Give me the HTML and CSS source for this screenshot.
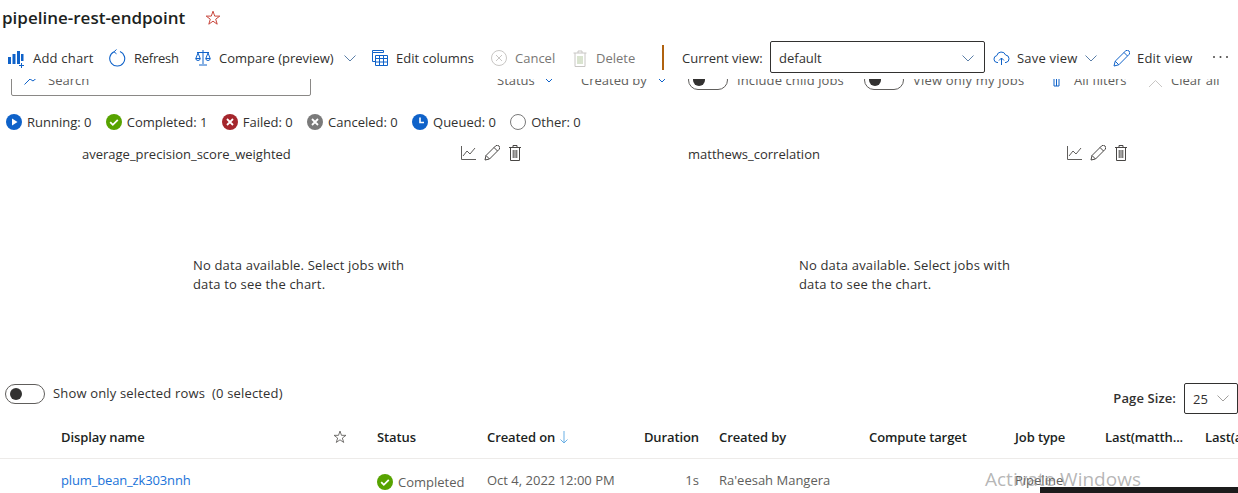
FILE: index.html
```html
<!DOCTYPE html>
<html lang="en">
<head>
    <meta charset="UTF-8">
    <meta name="viewport" content="width=device-width, initial-scale=1.0">
    <title>pipeline-rest-endpoint</title>
    <link rel="stylesheet" href="styles.css">
</head>
<body>
    <!-- Title -->
    <header class="title-row">
        <h1 class="page-title">pipeline-rest-endpoint</h1>
        <svg class="title-star" width="16" height="16" viewBox="0 0 16 16"><path d="M8 1.200l1.700 4.900h5.100l-4.100 3.100 1.500 5-4.200-3-4.200 3 1.500-5-4.100-3.100h5.100z" fill="none" stroke="#c8463c"/></svg>
    </header>

    <!-- Command bar -->
    <div class="toolbar">
        <span class="tool tool-add">
            <svg width="17" height="20" viewBox="0 0 17 20"><path d="M0 9h3v7H0zM4.500 6h3v10h-3zM9 3h3v13H9zM13 6h2.500v7H13z" fill="#0f62c9"/><path d="M13.500 15v5M11 17.500h5" stroke="#0f62c9"/></svg>
            Add chart
        </span>
        <span class="tool tool-refresh">
            <svg width="17" height="18" viewBox="0 0 17 18"><path d="M11 2.600A7.500 7.500 0 1 1 5 2.800" fill="none" stroke="#0f62c9" stroke-width="1.100"/><path d="M7.500 0.500L5 2.800l2.500 2" fill="none" stroke="#0f62c9"/></svg>
            Refresh
        </span>
        <span class="tool tool-compare">
            <svg width="16" height="18" viewBox="0 0 16 18"><path d="M8 1v14M2 3.500h12M4 16h8M3 4L.8 9.500h4.400zM13 4l-2.200 5.500h4.400zM.8 9.500a2.200 2 0 0 0 4.400 0M10.800 9.500a2.200 2 0 0 0 4.400 0" fill="none" stroke="#0f62c9"/></svg>
            Compare (preview)
        </span>
        <svg class="tool-chevron" width="12" height="7" viewBox="0 0 12 7"><path d="M.5.500L6 6l5.500-5.500" fill="none" stroke="#5b7fa8"/></svg>
        <span class="tool tool-columns">
            <svg width="16" height="16" viewBox="0 0 16 16"><path d="M.5.500h11v2h-11zM.5 2.500v9h3M3.500 5.500h12v10h-12zM3.500 8.500h12M3.500 12h12M7.500 5.500v10M11.500 5.500v10" fill="none" stroke="#0f62c9"/></svg>
            Edit columns
        </span>
        <span class="tool tool-cancel is-disabled">
            <svg width="16" height="16" viewBox="0 0 16 16"><circle cx="8" cy="8" r="7.500" fill="none" stroke="#c8c6c4"/><path d="M5 5l6 6M11 5l-6 6" stroke="#c8c6c4"/></svg>
            Cancel
        </span>
        <span class="tool tool-delete is-disabled">
            <svg width="14" height="17" viewBox="0 0 14 17"><path d="M.500 3h13M5 3V1h4v2M2 3v13.500h10V3" fill="none" stroke="#c8c6c4"/><path d="M5 6v8M7 6v8M9 6v8" stroke="#b4c8a0"/></svg>
            Delete
        </span>
        <span class="tool-divider"></span>
        <span class="view-label">Current view:</span>
        <div class="view-select">
            default
            <svg width="12" height="7" viewBox="0 0 12 7"><path d="M.5.500L6 6l5.500-5.500" fill="none" stroke="#5b7fa8"/></svg>
        </div>
        <span class="tool tool-save">
            <svg width="17" height="14" viewBox="0 0 17 14"><path d="M5 11.500H4A3.500 3.500 0 0 1 3.800 4.600 4.600 4.600 0 0 1 12.600 4a3.800 3.800 0 0 1 .4 7.500h-1" fill="none" stroke="#0f62c9"/><path d="M8.500 14V7M6 9.500l2.500-2.500L11 9.500" fill="none" stroke="#0f62c9"/></svg>
            Save view
        </span>
        <svg class="tool-chevron save-chevron" width="12" height="7" viewBox="0 0 12 7"><path d="M.5.500L6 6l5.500-5.500" fill="none" stroke="#5b7fa8"/></svg>
        <span class="tool tool-edit">
            <svg width="17" height="17" viewBox="0 0 17 17"><path d="M1 16l1.200-4.800L12.500 1a1.800 1.800 0 0 1 3.500 3.500L5.800 14.800zM2.200 11.200l3.600 3.600M11 2.500l3.500 3.500" fill="none" stroke="#0f62c9"/></svg>
            Edit view
        </span>
        <svg class="tool-more" width="15" height="2" viewBox="0 0 15 2"><circle cx="1" cy="1" r="1" fill="#484644"/><circle cx="7.500" cy="1" r="1" fill="#484644"/><circle cx="14" cy="1" r="1" fill="#484644"/></svg>
    </div>

    <!-- Filter row, scrolled under the command bar -->
    <div class="filter-clip">
        <div class="filter-row">
            <div class="search-box">
                <svg width="16" height="10" viewBox="0 0 16 10"><path d="M.500 9.500L6 4l3 2 6-5" fill="none" stroke="#0f62c9"/></svg>
                Search
            </div>
            <span class="filter filter-status">Status</span>
            <svg class="filter-chevron" width="8" height="5" viewBox="0 0 8 5"><path d="M.5.500L4 4 7.500.500" fill="none" stroke="#0f62c9"/></svg>
            <span class="filter filter-created">Created by</span>
            <svg class="filter-chevron" width="8" height="5" viewBox="0 0 8 5"><path d="M.5.500L4 4 7.500.500" fill="none" stroke="#0f62c9"/></svg>
            <span class="toggle toggle-child"></span>
            <span class="filter filter-child">Include child jobs</span>
            <span class="toggle toggle-mine"></span>
            <span class="filter filter-mine">View only my jobs</span>
            <svg class="filter-icon" width="8" height="14" viewBox="0 0 8 14"><path d="M1 0v13h5V0M3.500 0v13" fill="none" stroke="#0f62c9"/></svg>
            <span class="filter filter-all">All filters</span>
            <svg class="filter-x" width="15" height="14" viewBox="0 0 15 14"><path d="M1 14l6.500-6.500L14 14" fill="none" stroke="#c8c6c4"/></svg>
            <span class="filter filter-clear">Clear all</span>
        </div>
    </div>

    <!-- Status counts -->
    <div class="status-row">
        <span class="count count-running">
            <svg width="16" height="16" viewBox="0 0 16 16"><circle cx="8" cy="8" r="8" fill="#0f62c9"/><path d="M6 4.500l5.500 3.500L6 11.500z" fill="#fff"/></svg>
            Running: 0
        </span>
        <span class="count count-completed">
            <svg width="16" height="16" viewBox="0 0 16 16"><circle cx="8" cy="8" r="8" fill="#57a300"/><path d="M4.200 8.200l2.600 2.600 5-5" fill="none" stroke="#fff" stroke-width="1.800"/></svg>
            Completed: 1
        </span>
        <span class="count count-failed">
            <svg width="16" height="16" viewBox="0 0 16 16"><circle cx="8" cy="8" r="8" fill="#a4262c"/><path d="M5 5l6 6M11 5l-6 6" stroke="#fff" stroke-width="1.800"/></svg>
            Failed: 0
        </span>
        <span class="count count-canceled">
            <svg width="16" height="16" viewBox="0 0 16 16"><circle cx="8" cy="8" r="8" fill="#7a7a7a"/><path d="M5 5l6 6M11 5l-6 6" stroke="#fff" stroke-width="1.800"/></svg>
            Canceled: 0
        </span>
        <span class="count count-queued">
            <svg width="16" height="16" viewBox="0 0 16 16"><circle cx="8" cy="8" r="8" fill="#0f62c9"/><path d="M8 3.500V8.500H12" fill="none" stroke="#fff" stroke-width="1.600"/></svg>
            Queued: 0
        </span>
        <span class="count count-other">
            <svg width="16" height="16" viewBox="0 0 16 16"><circle cx="8" cy="8" r="7.500" fill="none" stroke="#7a7a7a"/></svg>
            Other: 0
        </span>
    </div>

    <!-- Charts -->
    <section class="charts">
        <div class="chart">
            <div class="chart-head">
                <span class="chart-title">average_precision_score_weighted</span>
                <span class="chart-actions">
                    <svg width="15" height="14" viewBox="0 0 15 14"><path d="M.5 0v13.500H15M2 10l4-5 3 3 5-6" fill="none" stroke="#605e5c"/></svg>
                    <svg width="16" height="16" viewBox="0 0 16 16"><path d="M1 15l1-4.500L11.500 1a1.700 1.700 0 0 1 3.500 3.500L5.500 14zM2 10.500L5.500 14M10 2.500L13.500 6" fill="none" stroke="#484644"/></svg>
                    <svg width="14" height="16" viewBox="0 0 14 16"><path d="M1 2.500h12M5 2.500V.500h4v2M2.500 2.500v13h9v-13M5.200 5v8M7 5v8M8.800 5v8" fill="none" stroke="#484644"/></svg>
                </span>
            </div>
            <p class="no-data">No data available. Select jobs with<br>data to see the chart.</p>
        </div>
        <div class="chart">
            <div class="chart-head">
                <span class="chart-title">matthews_correlation</span>
                <span class="chart-actions">
                    <svg width="15" height="14" viewBox="0 0 15 14"><path d="M.5 0v13.500H15M2 10l4-5 3 3 5-6" fill="none" stroke="#605e5c"/></svg>
                    <svg width="16" height="16" viewBox="0 0 16 16"><path d="M1 15l1-4.500L11.500 1a1.700 1.700 0 0 1 3.500 3.500L5.500 14zM2 10.500L5.500 14M10 2.500L13.500 6" fill="none" stroke="#484644"/></svg>
                    <svg width="14" height="16" viewBox="0 0 14 16"><path d="M1 2.500h12M5 2.500V.500h4v2M2.500 2.500v13h9v-13M5.200 5v8M7 5v8M8.800 5v8" fill="none" stroke="#484644"/></svg>
                </span>
            </div>
            <p class="no-data">No data available. Select jobs with<br>data to see the chart.</p>
        </div>
    </section>

    <!-- Table controls -->
    <div class="table-controls">
        <span class="toggle toggle-rows"></span>
        <span class="rows-label">Show only selected rows&nbsp; (0 selected)</span>
        <span class="page-size-label">Page Size:</span>
        <div class="page-size">
            25
            <svg width="12" height="7" viewBox="0 0 12 7"><path d="M.5.500L6 6l5.500-5.500" fill="none" stroke="#a19f9d"/></svg>
        </div>
    </div>

    <!-- Jobs table -->
    <div class="job-grid job-head">
        <span>Display name</span>
        <span><svg class="head-star" width="14" height="14" viewBox="0 0 16 16"><path d="M8 1.200l1.700 4.900h5.100l-4.100 3.100 1.500 5-4.200-3-4.200 3 1.500-5-4.100-3.100h5.100z" fill="none" stroke="#605e5c"/></svg></span>
        <span>Status</span>
        <span>Created on <svg class="sort-arrow" width="8" height="13" viewBox="0 0 8 13"><path d="M4 0v12M.5 8.500L4 12l3.500-3.500" fill="none" stroke="#69afe5"/></svg></span>
        <span class="cell-right">Duration</span>
        <span>Created by</span>
        <span>Compute target</span>
        <span>Job type</span>
        <span>Last(matth...</span>
        <span>Last(a</span>
    </div>
    <div class="job-grid job-row">
        <a class="job-link">plum_bean_zk303nnh</a>
        <span></span>
        <span class="job-status">
            <svg width="16" height="16" viewBox="0 0 16 16"><circle cx="8" cy="8" r="8" fill="#57a300"/><path d="M4.200 8.200l2.600 2.600 5-5" fill="none" stroke="#fff" stroke-width="1.800"/></svg>
            Completed
        </span>
        <span>Oct 4, 2022 12:00 PM</span>
        <span class="cell-right">1s</span>
        <span>Ra'eesah Mangera</span>
        <span></span>
        <span>Pipeline</span>
    </div>

    <!-- Desktop overlays caught in the screenshot -->
    <div class="activate">Activate Windows</div>
    <div class="taskbar"></div>
</body>
</html>
```

FILE: styles.css
```css
/* Global Styles */
body {
    font-family: 'Open Sans', 'Noto Sans', sans-serif;
    font-size: 13px;
    margin: 0;
    background-color: #fff;
    color: #323130;
    height: 493px;
    overflow: hidden;
    position: relative;
}

svg {
    flex: none;
    display: block;
}

/* Title */
.title-row {
    height: 36px;
    display: flex;
    align-items: center;
    padding-left: 2px;
}

.page-title {
    margin: 0;
    font-size: 17px;
    font-weight: 600;
    color: #201f1e;
    width: 203px;
    line-height: 34px;
}

/* Command bar */
.toolbar {
    margin-top: 5px;
    height: 32px;
    padding-bottom: 6px;
    display: flex;
    align-items: center;
    white-space: nowrap;
}

.tool {
    display: flex;
    align-items: center;
    gap: 8px;
    margin-top: 2px;
    color: #323130;
}

.tool.is-disabled {
    color: #797775;
}

.tool-add { margin-left: 8px; width: 86px; letter-spacing: 0.2px; }
.tool-refresh { margin-left: 15px; width: 70px; letter-spacing: -0.25px; }
.tool-compare { margin-left: 16px; width: 141px; }
.tool-chevron { margin: 2px 0 0 8px; }
.tool-columns { margin-left: 16px; width: 104px; }
.tool-cancel { margin-left: 15px; width: 65px; }
.tool-delete { margin-left: 17px; width: 63px; gap: 9px; }

.tool-divider {
    margin-left: 26px;
    width: 2px;
    height: 25px;
    background-color: #b0620f;
}

.view-label {
    margin: 2px 0 0 18px;
    width: 88px;
}

.view-select {
    width: 215px;
    height: 32px;
    box-sizing: border-box;
    border: 1px solid #323130;
    border-radius: 2px;
    display: flex;
    align-items: center;
    justify-content: space-between;
    padding: 2px 10px 0 8px;
}

.tool-save { margin-left: 8px; width: 85px; gap: 7px; letter-spacing: 0.2px; }
.tool-chevron.save-chevron { margin-left: 7px; }
.tool-edit { margin-left: 16px; width: 80px; gap: 7px; letter-spacing: 0.2px; }

.tool-more {
    margin: 0 0 0 20px;
}

/* Filter row, only its lower part shows */
.filter-clip {
    height: 18px;
    overflow: hidden;
}

.filter-row {
    margin-top: -15px;
    height: 32px;
    display: flex;
    align-items: center;
    white-space: nowrap;
    color: #605e5c;
}

.search-box {
    margin-left: 11px;
    width: 300px;
    height: 32px;
    box-sizing: border-box;
    border: 1px solid #8a8886;
    border-radius: 2px;
    display: flex;
    align-items: center;
    gap: 8px;
    padding-left: 12px;
}

.filter-status { margin-left: 186px; width: 48px; }
.filter-created { margin-left: 28px; width: 77px; }
.toggle-child { margin-left: 22px; }
.filter-child { margin-left: 9px; width: 127px; letter-spacing: 0.1px; }
.filter-mine { margin-left: 9px; width: 140px; letter-spacing: 0.2px; }
.filter-all { margin-left: 13px; width: 74px; }
.filter-clear { margin-left: 8px; }

/* Toggle switch */
.toggle {
    display: block;
    flex: none;
    position: relative;
    width: 40px;
    height: 20px;
    box-sizing: border-box;
    border: 1px solid #605e5c;
    border-radius: 10px;
}

.toggle::before {
    content: "";
    position: absolute;
    left: 4px;
    top: 3px;
    width: 12px;
    height: 12px;
    border-radius: 50%;
    background-color: #323130;
}

/* Status counts */
.status-row {
    height: 50px;
    display: flex;
    align-items: center;
    padding-left: 6px;
    gap: 14.3px;
    white-space: nowrap;
}

.count {
    display: flex;
    align-items: center;
    gap: 5px;
}

/* Charts */
.charts {
    display: grid;
    grid-template-columns: 606px 606px;
    height: 228px;
}

.chart-head {
    display: flex;
    align-items: center;
    height: 14px;
    padding-left: 82px;
}

.chart-title {
    width: 379px;
    white-space: nowrap;
}

.chart-actions {
    display: flex;
    align-items: center;
    gap: 8px;
    margin-top: -3px;
}

.no-data {
    margin: 95px 0 0 193px;
    line-height: 19px;
    letter-spacing: 0.17px;
    white-space: nowrap;
}

/* Table controls */
.table-controls {
    height: 41px;
    display: flex;
    align-items: flex-start;
    white-space: nowrap;
}

.toggle-rows {
    margin: 9px 0 0 5px;
}

.rows-label {
    margin: 8px 0 0 8px;
    line-height: 20px;
    letter-spacing: 0.16px;
    flex: 1;
}

.page-size-label {
    margin: 13px 8px 0 0;
    line-height: 20px;
    font-weight: 600;
    letter-spacing: 0.1px;
}

.page-size {
    margin-top: 8px;
    width: 54px;
    height: 31px;
    box-sizing: border-box;
    border: 1px solid #323130;
    border-radius: 2px;
    display: flex;
    align-items: center;
    gap: 9px;
    padding-left: 8px;
}

/* Jobs table */
.job-grid {
    display: grid;
    grid-template-columns: 272px 44px 110px 158px 54px 170px 146px 90px 100px 33px;
    padding-left: 61px;
    align-items: center;
    white-space: nowrap;
}

.job-grid > span:nth-child(6) {
    padding-left: 20px;
}

.job-head {
    height: 42px;
    font-weight: 600;
    letter-spacing: -0.1px;
    color: #201f1e;
    border-bottom: 1px solid #edebe9;
}

.job-head span {
    display: flex;
    align-items: center;
    gap: 5px;
}

.job-row {
    height: 41px;
    color: #605e5c;
}

.cell-right {
    text-align: right;
    justify-content: flex-end;
}

.job-link {
    color: #1a73d9;
    letter-spacing: -0.15px;
}

.job-status {
    display: flex;
    align-items: center;
    gap: 5px;
    padding-top: 5px;
}

/* Overlays */
.activate {
    position: absolute;
    left: 985px;
    top: 466px;
    font-size: 19px;
    color: rgba(120, 120, 120, 0.55);
    white-space: nowrap;
}

.taskbar {
    position: absolute;
    left: 1040px;
    right: 0;
    top: 487px;
    bottom: 0;
    background-color: #1c1c1c;
}
```
